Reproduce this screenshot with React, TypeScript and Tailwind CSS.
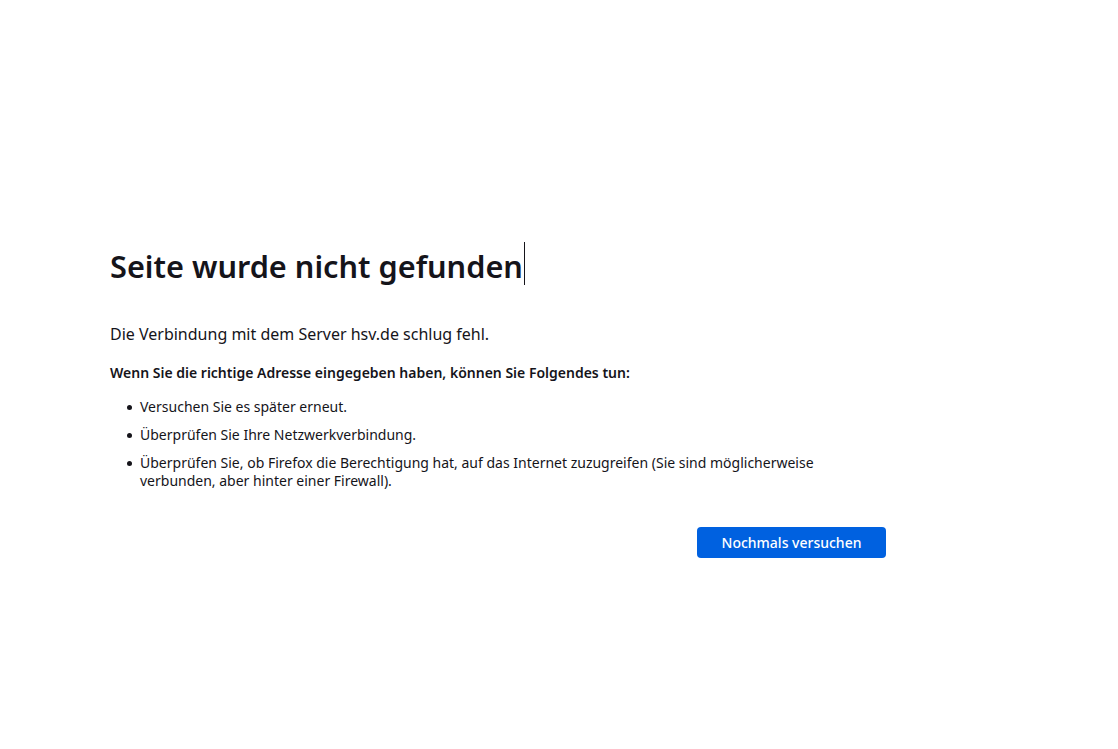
export default function App() {
    const items = [
        "Versuchen Sie es später erneut.",
        "Überprüfen Sie Ihre Netzwerkverbindung.",
        "Überprüfen Sie, ob Firefox die Berechtigung hat, auf das Internet zuzugreifen (Sie sind möglicherweise verbunden, aber hinter einer Firewall).",
    ];

    return (
        <div className="min-h-screen bg-white text-[#15141a] font-['Noto_Sans',sans-serif]">
            <div className="pt-[242px] pl-[110px] w-[886px]">
                <h1 className="text-[30.7px] leading-[43px] font-semibold flex items-stretch">
                    <span className="relative top-[3px]">Seite wurde nicht gefunden</span>
                    <span className="w-px bg-[#15141a] ml-px" />
                </h1>

                <p className="mt-[38px] text-[16px] leading-[22px]">
                    Die Verbindung mit dem Server hsv.de schlug fehl.
                </p>

                <p className="mt-[18px] text-[14px] leading-[20px] font-semibold">
                    Wenn Sie die richtige Adresse eingegeben haben, können Sie Folgendes tun:
                </p>

                <ul className="mt-[15px] pl-[30px] pr-[60px] flex flex-col gap-[10px] text-[14px] leading-[18px]">
                    {items.map((item, idx) => (
                        <li key={idx} className="relative">
                            <span className="absolute -left-[13px] top-[7px] w-[5px] h-[5px] rounded-full bg-[#15141a]" />
                            {item}
                        </li>
                    ))}
                </ul>

                <div className="mt-[37px] flex justify-end">
                    <button className="h-[31px] w-[189px] rounded-[4px] bg-[#0061e0] text-white text-[14px] font-medium">
                        Nochmals versuchen
                    </button>
                </div>
            </div>
        </div>
    );
}
